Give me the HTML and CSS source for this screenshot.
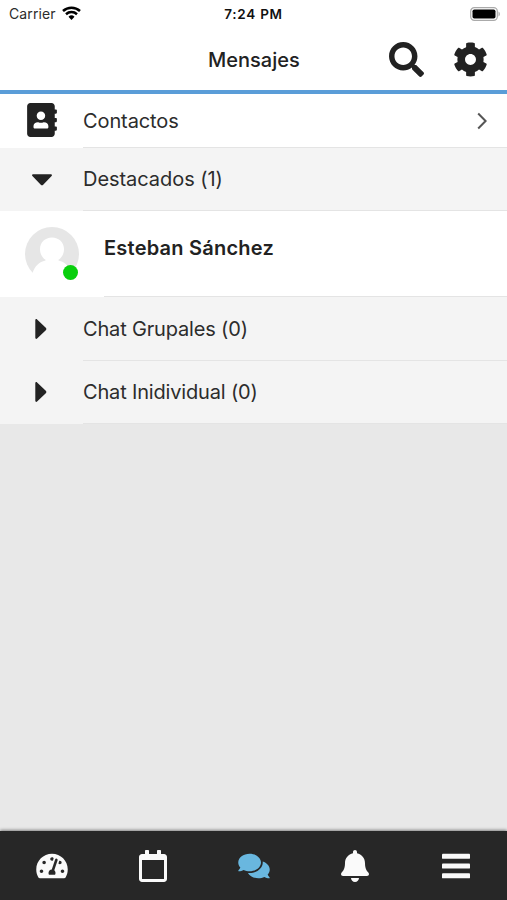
FILE: index.html
```html
<!DOCTYPE html>
<html lang="es">
<head>
<meta charset="utf-8">
<title>Mensajes</title>
<link rel="stylesheet" href="styles.css">
</head>
<body>
<div class="status">
  <div class="carrier"><span>Carrier</span>
    <svg class="wifi" viewBox="0 0 19 14"><path d="M9.500 14l3-3.300a4.500 4.500 0 0 0-6 0z"/><path class="arc" d="M1 5a12.500 12.500 0 0 1 17 0M4 8.200a8.200 8.200 0 0 1 11 0"/></svg>
  </div>
  <div class="time">7:24 PM</div>
  <svg class="battery" viewBox="0 0 30 14"><rect class="shell" x=".7" y=".7" width="26.600" height="12.600" rx="3.600"/><rect x="2.500" y="2.500" width="23" height="9" rx="1.800"/><path class="tip" d="M28.500 4.500c1.800.7 1.800 4.300 0 5z"/></svg>
</div>
<header class="header">
  <h1>Mensajes</h1>
  <div class="actions">
    <svg class="search" viewBox="0 0 512 512"><path d="M505 442.700L405.300 343c-4.500-4.500-10.600-7-17-7H372c27.600-35.300 44-79.700 44-128C416 93.100 322.900 0 208 0S0 93.100 0 208s93.100 208 208 208c48.300 0 92.700-16.400 128-44v16.300c0 6.400 2.500 12.500 7 17l99.700 99.700c9.400 9.400 24.600 9.400 33.900 0l28.300-28.300c9.400-9.400 9.400-24.600.1-34zM208 336c-70.700 0-128-57.200-128-128 0-70.700 57.200-128 128-128 70.700 0 128 57.200 128 128 0 70.700-57.200 128-128 128z"/></svg>
    <svg class="cog" viewBox="0 0 512 512"><path d="M487.400 315.700l-42.600-24.600c4.300-23.200 4.300-47 0-70.200l42.600-24.600c4.900-2.800 7.100-8.600 5.500-14-11.100-35.600-30-67.800-54.700-94.600-3.800-4.100-10-5.100-14.800-2.300L380.800 110c-17.900-15.400-38.500-27.300-60.800-35.100V25.800c0-5.600-3.900-10.500-9.400-11.700-36.700-8.200-74.300-7.800-109.200 0-5.500 1.200-9.400 6.100-9.400 11.700V75c-22.200 7.900-42.800 19.800-60.800 35.100L88.700 85.500c-4.900-2.800-11-1.900-14.800 2.300-24.700 26.700-43.600 58.900-54.700 94.600-1.700 5.400.6 11.200 5.500 14L67.300 221c-4.300 23.200-4.300 47 0 70.200l-42.600 24.600c-4.900 2.800-7.100 8.600-5.500 14 11.100 35.600 30 67.800 54.700 94.600 3.800 4.100 10 5.100 14.800 2.300l42.600-24.600c17.900 15.400 38.500 27.300 60.800 35.100v49.200c0 5.600 3.900 10.500 9.400 11.700 36.700 8.200 74.300 7.800 109.200 0 5.500-1.200 9.400-6.100 9.400-11.700v-49.200c22.200-7.900 42.800-19.800 60.800-35.100l42.600 24.600c4.900 2.800 11 1.900 14.800-2.300 24.700-26.700 43.600-58.900 54.700-94.600 1.500-5.500-.7-11.300-5.600-14.100zM256 336c-44.100 0-80-35.900-80-80s35.900-80 80-80 80 35.900 80 80-35.900 80-80 80z"/></svg>
  </div>
</header>
<main class="list">
  <div class="row contacts">
    <div class="lead"><svg class="book" viewBox="0 0 448 512"><path d="M436 160c6.600 0 12-5.400 12-12v-40c0-6.600-5.400-12-12-12h-20V48c0-26.500-21.500-48-48-48H48C21.500 0 0 21.500 0 48v416c0 26.500 21.500 48 48 48h320c26.500 0 48-21.500 48-48v-48h20c6.600 0 12-5.400 12-12v-40c0-6.600-5.400-12-12-12h-20v-64h20c6.600 0 12-5.400 12-12v-40c0-6.600-5.400-12-12-12h-20v-64h20zm-228-32c35.300 0 64 28.700 64 64s-28.700 64-64 64-64-28.700-64-64 28.700-64 64-64zm112 236.800c0 10.600-10 19.200-22.400 19.200H118.400C106 384 96 375.400 96 364.800v-19.200c0-31.800 30.100-57.600 67.200-57.600h5c12.300 5.100 25.700 8 39.800 8s27.600-2.900 39.800-8h5c37.100 0 67.200 25.800 67.200 57.600v19.200z"/></svg></div>
    <div class="body"><span class="t-contacts">Contactos</span><svg class="chevron" viewBox="0 0 10 18"><path d="M1.200 1.500L8.600 9l-7.400 7.500"/></svg></div>
  </div>
  <div class="row group starred">
    <div class="lead"><svg class="down" viewBox="0 0 20 12"><path d="M1.200.3h17.600c1 0 1.500 1.100.8 1.800l-8.400 8.700c-.7.700-1.700.7-2.400 0L.4 2.100C-.3 1.400.2.3 1.200.3z"/></svg></div>
    <div class="body"><span class="t-starred">Destacados (1)</span></div>
  </div>
  <div class="row person">
    <div class="avatar">
      <svg viewBox="0 0 54 54"><circle class="disc" cx="27" cy="27" r="27"/><path class="figure" d="M27 10.500c-7 0-12 5-12 11.500 0 4.500 2 8.500 5.500 10.800v.7C14 35 10 39 7.500 46v8h39v-8C44 39 40 35 33.500 33.500v-.7C37 30.500 39 26.500 39 22c0-6.500-5-11.500-12-11.500z"/></svg>
      <i class="online"></i>
    </div>
    <div class="body"><span class="name">Esteban Sánchez</span></div>
  </div>
  <div class="row group">
    <div class="lead"><svg class="right" viewBox="0 0 12 20"><path d="M.3 1.200v17.600c0 1 1.100 1.500 1.800.8l8.700-8.400c.7-.7.7-1.700 0-2.400L2.100.4C1.400-.3.3.2.3 1.200z"/></svg></div>
    <div class="body"><span class="t-groups">Chat Grupales (0)</span></div>
  </div>
  <div class="row group last">
    <div class="lead"><svg class="right" viewBox="0 0 12 20"><path d="M.3 1.200v17.600c0 1 1.100 1.500 1.800.8l8.700-8.400c.7-.7.7-1.700 0-2.400L2.100.4C1.400-.3.3.2.3 1.200z"/></svg></div>
    <div class="body"><span class="t-single">Chat Inidividual (0)</span></div>
  </div>
</main>
<nav class="tabs">
  <svg class="wide" viewBox="0 0 576 512"><path d="M288 32C128.940 32 0 160.940 0 320c0 52.800 14.250 102.260 39.060 144.800 5.610 9.620 16.300 15.200 27.440 15.200h443c11.140 0 21.830-5.580 27.440-15.200C561.750 422.260 576 372.800 576 320c0-159.060-128.940-288-288-288zm0 64c14.710 0 26.580 10.130 30.320 23.650-1.110 2.260-2.640 4.230-3.450 6.670l-9.220 27.670c-5.130 3.490-10.970 6.010-17.640 6.010-17.670 0-32-14.330-32-32S270.330 96 288 96zM96 384c-17.670 0-32-14.330-32-32s14.330-32 32-32 32 14.330 32 32-14.330 32-32 32zm48-160c-17.670 0-32-14.330-32-32s14.330-32 32-32 32 14.330 32 32-14.330 32-32 32zm246.770-72.410l-61.330 184C343.130 347.330 352 364.540 352 384c0 11.720-3.380 22.550-8.880 32H232.880c-5.500-9.450-8.880-20.280-8.880-32 0-33.940 26.500-61.430 59.900-63.590l61.340-184.010c4.170-12.560 17.730-19.450 30.360-15.170 12.570 4.190 19.350 17.790 15.170 30.360zm14.660 57.200l15.520-46.550c3.470-1.290 7.130-2.230 11.050-2.230 17.670 0 32 14.330 32 32s-14.330 32-32 32c-11.380-.01-20.890-6.280-26.570-15.220zM480 384c-17.670 0-32-14.330-32-32s14.330-32 32-32 32 14.330 32 32-14.330 32-32 32z"/></svg>
  <svg viewBox="0 0 448 512"><path d="M400 64h-48V12c0-6.600-5.400-12-12-12h-40c-6.600 0-12 5.400-12 12v52H160V12c0-6.600-5.400-12-12-12h-40c-6.600 0-12 5.400-12 12v52H48C21.500 64 0 85.500 0 112v352c0 26.500 21.500 48 48 48h352c26.500 0 48-21.500 48-48V112c0-26.500-21.500-48-48-48zm-6 400H54c-3.300 0-6-2.700-6-6V160h352v298c0 3.300-2.700 6-6 6z"/></svg>
  <svg class="wide active" viewBox="0 0 576 512"><path d="M416 192c0-88.400-93.100-160-208-160S0 103.600 0 192c0 34.300 14.100 65.900 38 92-13.400 30.200-35.500 54.200-35.800 54.500-2.200 2.300-2.800 5.700-1.500 8.700S4.800 352 8 352c36.600 0 66.900-12.300 88.700-25 32.200 15.700 70.300 25 111.300 25 114.900 0 208-71.600 208-160zm122 220c23.900-26 38-57.700 38-92 0-66.900-53.500-124.200-129.300-148.100.9 6.600 1.300 13.300 1.300 20.100 0 105.900-107.700 192-240 192-10.800 0-21.300-.8-31.700-1.900C207.800 439.600 281.800 480 368 480c41 0 79.100-9.200 111.300-25 21.800 12.700 52.100 25 88.700 25 3.200 0 6.100-1.900 7.300-4.800 1.300-2.900.7-6.300-1.500-8.700-.3-.3-22.400-24.200-35.800-54.500z"/></svg>
  <svg viewBox="0 0 448 512"><path d="M224 512c35.320 0 63.970-28.650 63.970-64H160.030c0 35.350 28.650 64 63.970 64zm215.390-149.710c-19.320-20.760-55.470-51.990-55.470-154.290 0-77.700-54.480-139.900-127.940-155.160V32c0-17.670-14.320-32-31.980-32s-31.980 14.330-31.980 32v20.840C118.560 68.100 64.080 130.300 64.080 208c0 102.300-36.150 133.530-55.470 154.290-6 6.450-8.660 14.160-8.610 21.710.11 16.400 12.980 32 32.100 32h383.800c19.120 0 32-15.600 32.100-32 .05-7.550-2.610-15.270-8.610-21.710z"/></svg>
  <svg viewBox="0 0 448 512"><rect y="60" width="448" height="80" rx="14"/><rect y="216" width="448" height="80" rx="14"/><rect y="372" width="448" height="80" rx="14"/></svg>
</nav>
</body>
</html>
```
FILE: styles.css
```css
* { box-sizing: border-box; }
body {
  margin: 0;
  height: 900px;
  display: flex;
  flex-direction: column;
  background: #e8e8e8;
  color: #2c2c2c;
  font-family: Inter, "Liberation Sans", sans-serif;
  font-size: 20px;
}
svg { display: block; fill: #222; flex: none; }
.status {
  height: 28px;
  padding: 0 7px 0 9px;
  display: grid;
  grid-template-columns: 1fr auto 1fr;
  align-items: center;
  background: #fff;
  font-size: 14px;
}
.carrier { display: flex; align-items: center; gap: 6px; letter-spacing: .1px; }
.carrier span { margin-top: -2px; }
.wifi { width: 19px; height: 14px; margin-top: -2px; fill: #000; }
.arc { fill: none; stroke: #000; stroke-width: 2.5; }
.time { margin-right: 2px; font-weight: 600; font-size: 13.5px; letter-spacing: .75px; color: #111; }
.battery { width: 30px; height: 14px; justify-self: end; margin-top: -1px; fill: #000; }
.shell { fill: #fff; stroke: #aaa; stroke-width: 1.2; }
.tip { fill: #aaa; }
.header {
  height: 66px;
  padding: 0 19px 0 0;
  display: grid;
  grid-template-columns: 208px 1fr auto;
  align-items: center;
  background: #fff;
  border-bottom: 4px solid #5a9dd8;
}
h1 { grid-column: 2; margin: 1px 0 0; font-size: 20px; font-weight: 500; line-height: 26px; color: #222; }
.actions { display: flex; align-items: center; gap: 29px; }
.search, .cog { width: 35px; height: 35px; margin-top: 1px; }
.row { display: flex; background: #fff; }
.group { background: #f4f4f4; }
.lead { width: 83px; flex: none; display: flex; align-items: center; }
.body {
  flex: 1;
  display: flex;
  align-items: center;
  justify-content: space-between;
  border-bottom: 1px solid #e4e4e4;
}
.contacts { height: 54px; }
.group { height: 64px; }
.group.starred, .group.last { height: 63px; }
.t-contacts { letter-spacing: -.1px; }
.t-starred { letter-spacing: -.05px; }
.t-groups, .t-single { letter-spacing: -.17px; }
.book { width: 30px; height: 34px; margin-left: 27px; margin-top: -2px; }
.down { width: 20px; height: 12px; margin-left: 32px; }
.right { width: 12px; height: 20px; margin-left: 35px; }
.last .right { margin-top: -1px; }
.chevron { width: 10px; height: 18px; margin-right: 20px; fill: none; stroke: #555; stroke-width: 2; }
.person { height: 86px; }
.avatar { position: relative; width: 54px; height: 54px; margin: 16px 25px 0; }
.disc { fill: #e6e6e6; }
.figure { fill: #fff; }
.online {
  position: absolute;
  left: 38px;
  top: 38px;
  width: 15px;
  height: 15px;
  border-radius: 50%;
  background: #08cf0c;
}
.person .body { align-items: flex-start; padding-top: 24px; }
.name { font-weight: 600; line-height: 26px; letter-spacing: .23px; color: #222; }
.tabs {
  height: 69px;
  margin-top: auto;
  padding-left: 1px;
  display: grid;
  grid-template-columns: repeat(5, 1fr);
  place-items: center;
  background: #272727;
  box-shadow: 0 -1px 3px rgba(0, 0, 0, .45);
}
.tabs svg { width: 28px; height: 32px; fill: #fafafa; }
.tabs .wide { width: 32px; height: 28px; }
.tabs .active { fill: #69b7df; }
```
